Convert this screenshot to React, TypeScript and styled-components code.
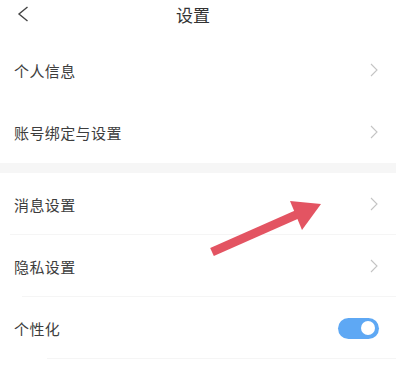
import React from "react";
import styled, { createGlobalStyle } from "styled-components";

const GlobalStyle = createGlobalStyle`
  html, body {
    margin: 0;
    padding: 0;
    background: #fff;
  }
  body {
    font-family: "Noto Sans CJK SC", "Noto Sans", sans-serif;
  }
`;

const Page = styled.div`
  position: relative;
  width: 403px;
  height: 379px;
  overflow: hidden;
  background: #fff;
`;

const Content = styled.div`
  width: 396px;
`;

const Header = styled.div`
  height: 39px;
  display: flex;
  align-items: center;
  justify-content: center;
  position: relative;
`;

const BackButton = styled.div`
  position: absolute;
  left: 16px;
  top: 5px;
  display: flex;
`;

const Title = styled.div`
  font-size: 17px;
  color: #333;
  margin-top: -10px;
  margin-left: -10px;
`;

const Group = styled.div``;

const Row = styled.div<{ $inset?: number; $divider?: boolean }>`
  height: 62px;
  display: flex;
  align-items: center;
  justify-content: space-between;
  padding: 0 18px 0 14px;
  position: relative;
  &::after {
    content: "";
    display: ${(p) => (p.$divider ? "block" : "none")};
    position: absolute;
    left: ${(p) => p.$inset ?? 14}px;
    right: 0;
    bottom: 0;
    height: 1px;
    background: #f5f5f5;
  }
`;

const Label = styled.span`
  font-size: 15px;
  color: #3d3d3d;
  letter-spacing: 0.4px;
`;

const Band = styled.div`
  height: 10px;
  background: #f6f6f6;
`;

const Toggle = styled.div<{ $on: boolean }>`
  width: 41px;
  height: 21px;
  border-radius: 11px;
  background: ${(p) => (p.$on ? "#5ea8f4" : "#ddd")};
  display: flex;
  align-items: center;
  justify-content: ${(p) => (p.$on ? "flex-end" : "flex-start")};
  padding: 0 4px;
  box-sizing: border-box;
  margin-right: -1px;
`;

const Knob = styled.div`
  width: 14px;
  height: 14px;
  border-radius: 50%;
  background: #fff;
`;

const ArrowLayer = styled.svg`
  position: absolute;
  left: 0;
  top: 0;
  pointer-events: none;
`;

const Chevron = () => (
  <svg width="8" height="14" viewBox="0 0 8 14">
    <path d="M1 1 L7 7 L1 13" fill="none" stroke="#c4c4c4" strokeWidth="1.1" />
  </svg>
);

type Item = { label: string; toggle?: boolean; inset?: number; divider?: boolean };

const groupA: Item[] = [
  { label: "个人信息" },
  { label: "账号绑定与设置" },
];

const groupB: Item[] = [
  { label: "消息设置", divider: true, inset: 10 },
  { label: "隐私设置", divider: true, inset: 22 },
  { label: "个性化", toggle: true, divider: true, inset: 47 },
];

const renderRow = (it: Item) => (
  <Row key={it.label} $divider={it.divider} $inset={it.inset}>
    <Label>{it.label}</Label>
    {it.toggle ? (
      <Toggle $on>
        <Knob />
      </Toggle>
    ) : (
      <Chevron />
    )}
  </Row>
);

export default function App() {
  return (
    <Page>
      <GlobalStyle />
      <Content>
        <Header>
          <BackButton>
            <svg width="14" height="18" viewBox="0 0 14 18">
              <path d="M11.5 2 L3 9 L11.5 16" fill="none" stroke="#444" strokeWidth="1.4" />
            </svg>
          </BackButton>
          <Title>设置</Title>
        </Header>
        <Group>{groupA.map(renderRow)}</Group>
        <Band />
        <Group>{groupB.map(renderRow)}</Group>
      </Content>
      <ArrowLayer width="403" height="379" viewBox="0 0 403 379">
        <line x1="212" y1="252" x2="298" y2="214" stroke="#e35462" strokeWidth="9" />
        <polygon points="290,201 321,204 302,230" fill="#e35462" />
      </ArrowLayer>
    </Page>
  );
}
